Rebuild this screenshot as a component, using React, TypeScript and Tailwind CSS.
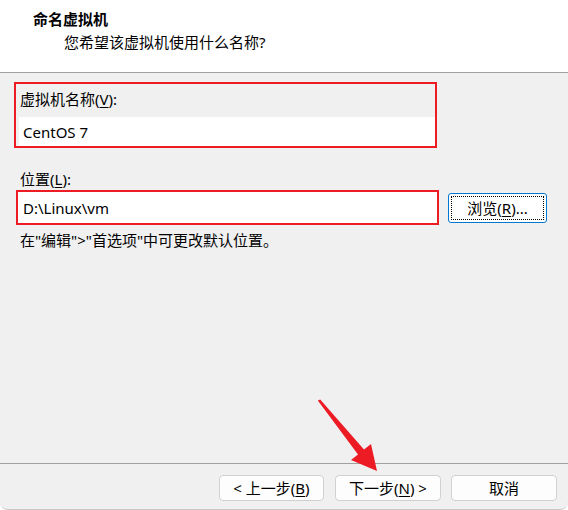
import React from "react"

const font = "font-['Segoe_UI','Noto_Sans','Noto_Sans_CJK_SC',sans-serif]"

// mnemonic letter with underline, as in a Windows dialog
function Key({ k }: { k: string }) {
  return <span className="underline underline-offset-2 decoration-1">{k}</span>
}

function DialogButton({ children, w }: { children: React.ReactNode; w: string }) {
  return (
    <button
      className={`${w} h-[26px] rounded-[4px] border border-[#d0d0d0] bg-[#fdfdfd] text-[15px] leading-[20px] text-black flex items-center justify-center`}
    >
      {children}
    </button>
  )
}

export default function App() {
  return (
    <div className={`${font} w-[568px] h-[510px] bg-white text-black`}>
      <div className="relative w-full h-full flex flex-col bg-[#f0f0f0] rounded-b-[8px] border-b border-[#c8c8c8] overflow-hidden">
        {/* header */}
        <div className="h-[73px] bg-white border-b border-[#a0a0a0] pt-[9px]">
          <div className="pl-[33px] text-[15px] leading-[20px] font-bold">命名虚拟机</div>
          <div className="pl-[64px] mt-[3px] text-[15px] leading-[20px]">您希望该虚拟机使用什么名称?</div>
        </div>

        {/* body */}
        <div className="flex-1 text-[15px] leading-[20px]">
          <div className="mt-[9px] ml-[14px] w-[423px] h-[66px] border-2 border-[#ed1c24] flex flex-col">
            <div className="pt-[5px] pl-[4px]">
              虚拟机名称(<Key k="V" />):
            </div>
            <div className="mt-[8px] ml-[3px] flex-1 bg-white pl-[4px] flex items-center">CentOS 7</div>
          </div>

          <div className="mt-[21px] pl-[20px]">
            位置(<Key k="L" />):
          </div>

          <div className="mt-[1px] flex items-center">
            <div className="ml-[16px] w-[423px] h-[35px] border-2 border-[#ed1c24] bg-white pl-[5px] flex items-center">
              D:\Linux\vm
            </div>
            <button className="ml-[9px] w-[99px] h-[30px] rounded-[3px] border border-[#0078d4] bg-white p-[2px]">
              <span className="flex w-full h-full items-center justify-center border border-dotted border-black">
                浏览(<Key k="R" />)...
              </span>
            </button>
          </div>

          <div className="mt-[5px] pl-[20px]">在"编辑"&gt;"首选项"中可更改默认位置。</div>
        </div>

        {/* footer */}
        <div className="h-[46px] border-t border-[#a0a0a0] pt-[11px] flex justify-end pr-[11px]">
          <DialogButton w="w-[105px]">
            &lt; 上一步(<Key k="B" />)
          </DialogButton>
          <div className="w-[11px]" />
          <DialogButton w="w-[106px]">
            下一步(<Key k="N" />) &gt;
          </DialogButton>
          <div className="w-[10px]" />
          <DialogButton w="w-[106px]">取消</DialogButton>
        </div>

        {/* red annotation arrow */}
        <svg className="absolute left-0 top-0 pointer-events-none" width="568" height="510" viewBox="0 0 568 510">
          <polygon
            points="317.8,400.4 320.2,399.4 364,449.5 371,444 377,471 351,460 358,454.5"
            fill="#ed1c24"
          />
        </svg>
      </div>
    </div>
  )
}
